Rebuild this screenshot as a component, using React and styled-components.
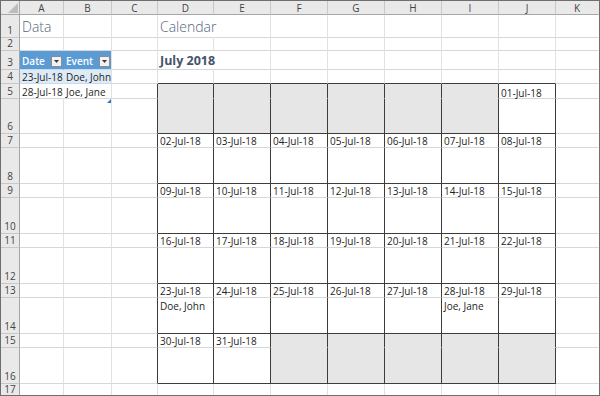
import React from 'react';
import styled, { createGlobalStyle } from 'styled-components';

const GlobalStyle = createGlobalStyle`
  html, body { margin: 0; padding: 0; background: #ffffff; }
  body { font-family: "Open Sans", "Noto Sans", sans-serif; }
`;

const DARK = '#3c3c3c';
const GRAY_FILL = '#e6e6e6';
const HEAD_BG = '#e9e9e9';
const HEAD_LINE = '#a6a6a6';
const HEAD_SEP = '#c8c8c8';
const GRID_H = '#d6d6d6';
const GRID_V = '#e1e1e1';
const BLUE = '#5b9bd5';
const LIGHT_BLUE = '#ddebf7';

const COLS = ['A', 'B', 'C', 'D', 'E', 'F', 'G', 'H', 'I', 'J', 'K'];
const ROWS = Array.from({ length: 17 }, (_, i) => i + 1);
const EVENTS = { 23: 'Doe, John', 28: 'Joe, Jane' };

const Sheet = styled.div`
  width: 600px;
  height: 396px;
  box-sizing: border-box;
  border: 1px solid #6e6e6e;
  background: #ffffff;
  display: grid;
  grid-template-columns: 19px 44px 48px 46px 56px repeat(6, 57px) 1fr;
  grid-template-rows: 14px 23px 13px 19px 14px 15px 35px repeat(5, 14px 36px) 1fr;
  overflow: hidden;
`;

const Corner = styled.div`
  box-sizing: border-box;
  background: ${HEAD_BG};
  border-right: 1px solid ${HEAD_LINE};
  border-bottom: 1px solid ${HEAD_LINE};
  display: flex;
  align-items: flex-end;
  justify-content: flex-end;
  padding: 0 1px 1px 0;
`;

const ColHead = styled.div`
  box-sizing: border-box;
  background: ${HEAD_BG};
  border-right: 1px solid ${(p) => (p.$last ? 'transparent' : HEAD_SEP)};
  border-bottom: 1px solid ${HEAD_LINE};
  display: flex;
  align-items: center;
  justify-content: center;
  font-size: 10px;
  line-height: 1;
  color: #444444;
`;

const RowHead = styled.div`
  box-sizing: border-box;
  background: ${HEAD_BG};
  border-right: 1px solid ${HEAD_LINE};
  border-bottom: 1px solid ${(p) => (p.$last ? 'transparent' : HEAD_SEP)};
  display: flex;
  align-items: flex-end;
  justify-content: center;
  padding-bottom: ${(p) => (p.$last ? '1px' : '2px')};
  font-size: 10px;
  line-height: 1;
  color: #444444;
`;

const Cell = styled.div`
  box-sizing: border-box;
  min-width: 0;
  position: relative;
  background: ${(p) => p.$bg || 'transparent'};
  border-right: 1px solid ${(p) => p.$right || GRID_V};
  border-bottom: 1px solid ${(p) => p.$bottom || GRID_H};
  display: flex;
  align-items: ${(p) => (p.$top ? 'flex-start' : 'flex-end')};
  justify-content: ${(p) => (p.$spread ? 'space-between' : 'flex-start')};
  padding: ${(p) => (p.$top ? '3px 2px 0 2px' : '0 1px 0 2px')};
  white-space: nowrap;
  font-size: 10px;
  line-height: 1;
  color: #1e1e1e;
`;

const Title = styled.span`
  font-size: 14px;
  font-weight: 300;
  color: #56667c;
  padding-bottom: 3px;
`;

const Month = styled.span`
  font-size: 12.5px;
  font-weight: 700;
  color: #44546a;
  padding-bottom: 2px;
`;

const HeadLabel = styled.span`
  font-weight: 600;
  color: #ffffff;
  padding-bottom: 3px;
`;

const Value = styled.span`
  padding-bottom: ${(p) => (p.$pad ? '1px' : '0')};
`;

const FilterButton = styled.span`
  box-sizing: border-box;
  width: 11px;
  height: 11px;
  margin-bottom: 2px;
  background: #f2f2f2;
  border: 1px solid #8c8c8c;
  display: flex;
  align-items: center;
  justify-content: center;
`;

const ResizeHandle = styled.span`
  position: absolute;
  right: 0;
  bottom: 0;
  width: 4px;
  height: 4px;
  display: block;
`;

const fmt = (d) => `${String(d).padStart(2, '0')}-Jul-18`;

function Filter() {
  return (
    <FilterButton>
      <svg width="5" height="3" viewBox="0 0 5 3">
        <polygon points="0,0 5,0 2.5,3" fill="#3a3a3a" />
      </svg>
    </FilterButton>
  );
}

function CornerMark() {
  return (
    <svg width="10" height="10" viewBox="0 0 10 10">
      <polygon points="10,0 10,10 0,10" fill="#bcbcbc" />
    </svg>
  );
}

function SheetCell({ r, ci }) {
  const inCal = r >= 5 && r <= 16 && ci >= 3 && ci <= 9;
  if (inCal) {
    const week = Math.floor((r - 5) / 2);
    const isDateRow = (r - 5) % 2 === 0;
    const day = week * 7 + (ci - 3) - 5;
    const valid = day >= 1 && day <= 31;
    if (!valid) {
      return <Cell $bg={GRAY_FILL} $right={DARK} $bottom={isDateRow ? GRAY_FILL : DARK} />;
    }
    if (isDateRow) {
      return (
        <Cell $right={DARK}>
          <Value $pad={r !== 5}>{fmt(day)}</Value>
        </Cell>
      );
    }
    return (
      <Cell $right={DARK} $bottom={DARK} $top>
        {EVENTS[day] && <Value>{EVENTS[day]}</Value>}
      </Cell>
    );
  }

  const col = COLS[ci];
  const last = r === 17;
  const bottom = last ? 'transparent' : r === 4 && ci >= 3 && ci <= 9 ? DARK : undefined;
  const right = ci === 10 ? 'transparent' : ci === 2 && r >= 5 && r <= 16 ? DARK : undefined;

  if (r === 1 && col === 'A') {
    return (
      <Cell $right={right}>
        <Title>Data</Title>
      </Cell>
    );
  }
  if (r === 1 && col === 'D') {
    return (
      <Cell $right="transparent">
        <Title>Calendar</Title>
      </Cell>
    );
  }
  if (r === 3 && col === 'D') {
    return (
      <Cell $right="transparent">
        <Month>July 2018</Month>
      </Cell>
    );
  }
  if (r === 3 && col === 'A') {
    return (
      <Cell $bg={BLUE} $right={BLUE} $bottom="#c9dcef" $spread>
        <HeadLabel>Date</HeadLabel>
        <Filter />
      </Cell>
    );
  }
  if (r === 3 && col === 'B') {
    return (
      <Cell $bg={BLUE} $bottom="#c9dcef" $spread>
        <HeadLabel>Event</HeadLabel>
        <Filter />
      </Cell>
    );
  }
  if (r === 4 && (col === 'A' || col === 'B')) {
    return (
      <Cell $bg={LIGHT_BLUE} $right={col === 'A' ? LIGHT_BLUE : undefined} $bottom="#c9dcef">
        <Value $pad>{col === 'A' ? '23-Jul-18' : 'Doe, John'}</Value>
      </Cell>
    );
  }
  if (r === 5 && (col === 'A' || col === 'B')) {
    return (
      <Cell $right={col === 'A' ? '#ffffff' : undefined}>
        <Value $pad>{col === 'A' ? '28-Jul-18' : 'Joe, Jane'}</Value>
        {col === 'B' && (
          <ResizeHandle>
            <svg width="4" height="4" viewBox="0 0 4 4">
              <polygon points="4,0 4,4 0,4" fill="#2e75b6" />
            </svg>
          </ResizeHandle>
        )}
      </Cell>
    );
  }
  return <Cell $right={right} $bottom={bottom} />;
}

export default function App() {
  return (
    <>
      <GlobalStyle />
      <Sheet>
        <Corner>
          <CornerMark />
        </Corner>
        {COLS.map((c, i) => (
          <ColHead key={c} $last={i === COLS.length - 1}>
            {c}
          </ColHead>
        ))}
        {ROWS.map((r) => (
          <React.Fragment key={r}>
            <RowHead $last={r === 17}>{r}</RowHead>
            {COLS.map((c, ci) => (
              <SheetCell key={c + r} r={r} ci={ci} />
            ))}
          </React.Fragment>
        ))}
      </Sheet>
    </>
  );
}
